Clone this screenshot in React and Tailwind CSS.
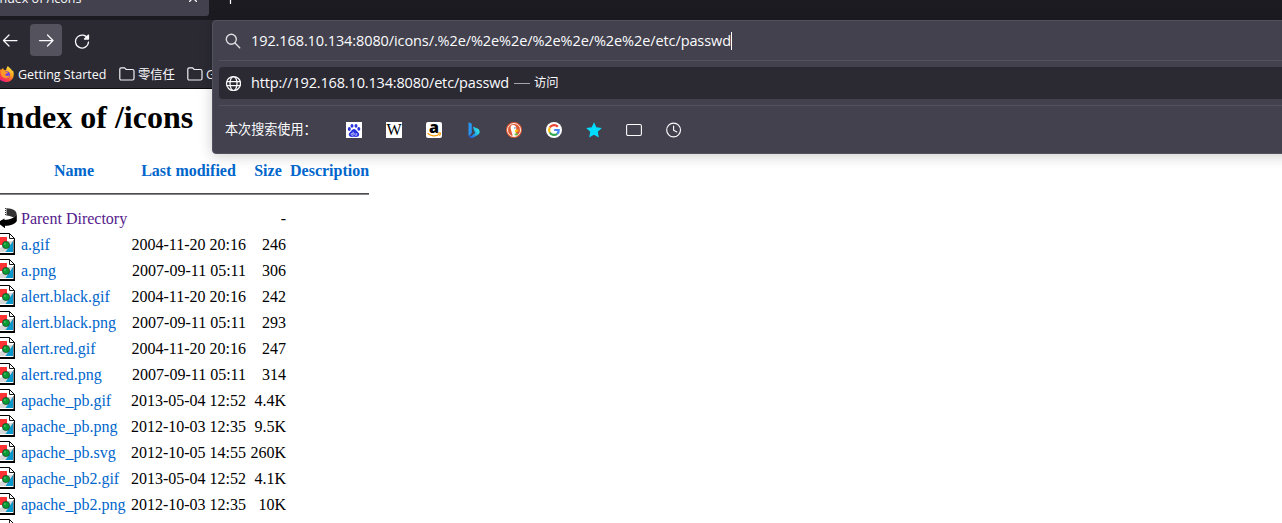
import React from "react";

const files = [
  ["a.gif", "2004-11-20 20:16", "246"],
  ["a.png", "2007-09-11 05:11", "306"],
  ["alert.black.gif", "2004-11-20 20:16", "242"],
  ["alert.black.png", "2007-09-11 05:11", "293"],
  ["alert.red.gif", "2004-11-20 20:16", "247"],
  ["alert.red.png", "2007-09-11 05:11", "314"],
  ["apache_pb.gif", "2013-05-04 12:52", "4.4K"],
  ["apache_pb.png", "2012-10-03 12:35", "9.5K"],
  ["apache_pb.svg", "2012-10-05 14:55", "260K"],
  ["apache_pb2.gif", "2013-05-04 12:52", "4.1K"],
  ["apache_pb2.png", "2012-10-03 12:35", "10K"],
];

function ImageFileIcon() {
  return (
    <svg className="mb-[2px] block h-[22px] w-4" viewBox="0 0 16 22">
      <path d="M0 1h9.500l4.500 4.500V20H0z" fill="#fff" />
      <path d="M7 8h6v11H0v-4l6-3z" fill="#d8d8d8" />
      <path d="M0 .5h9.500L14.500 5.500V21.300" fill="none" stroke="#000" />
      <path d="M9.500 .5v5h5" fill="none" stroke="#000" strokeWidth=".9" />
      <path d="M13.500 7H15v15H0v-2h13.500z" fill="#000" />
      <path d="M0 4h7v6.500H4L2 12H0z" fill="#ff3333" />
      <path d="M13 8v11H5.500z" fill="#0898cc" />
      <circle cx="6" cy="12" r="3.600" fill="#079b34" stroke="#173d23" strokeWidth=".7" />
      <path d="M4.200 10.500h1.500v1H4.200z" fill="#84d69b" />
    </svg>
  );
}

function BackIcon() {
  return (
    <svg className="mb-[2px] block h-[22px] w-[18px]" viewBox="0 0 18 22">
      <path d="M7 1.200l4 .5c4 1 5.700 3 5.700 6L14 10.500 9.500 9 7 8.500z" fill="#333" />
      <path d="M5.500 1v8" stroke="#333" strokeDasharray="1 1" />
      <path d="M6.500 1.500v7" stroke="#333" strokeDasharray="1 1" />
      <path d="M16.800 7.500v6.500c-1.500 3-6 4.800-11.800 4.800v2.500L0 17.500V14l4.500-2.500V13c5.500-.5 9.500-1.500 12.300-5.500z" fill="#000" />
    </svg>
  );
}

function Folder() {
  return (
    <svg className="h-[14px] w-4 shrink-0" viewBox="0 0 16 14" fill="none" stroke="#f0f0f4" strokeWidth="1.200">
      <path d="M.8 11.500V2.200C.8 1.300 1.400.8 2.200.8h3.300l1.700 1.700h6.200c1 0 1.600.6 1.600 1.500v7.500c0 .9-.6 1.500-1.500 1.500H2.200c-.8 0-1.400-.6-1.400-1.500z" />
    </svg>
  );
}

function FirefoxIcon() {
  return (
    <svg className="h-4 w-[14px] shrink-0" viewBox="2 0 14 16">
      <defs>
        <linearGradient id="fox" x1=".9" y1="0" x2=".25" y2="1">
          <stop offset="0" stopColor="#fff44f" />
          <stop offset=".4" stopColor="#ffab20" />
          <stop offset=".7" stopColor="#ff4b3b" />
          <stop offset="1" stopColor="#e31587" />
        </linearGradient>
      </defs>
      <path d="M10 0c1 2 4 3 4 5l1-.5c1 2 .9 5 .2 7A8 8 0 0 1 0 8c0-2 1-4 2-5l1 1 2-2 1 2 2 .2C8.500 2 9 1 10 0z" fill="url(#fox)" />
      <circle cx="8.500" cy="8.700" r="3.500" fill="#7542e5" />
      <path d="M3 5c2-1 4-.5 5 1l2 .3c-.3 1-1.500 1.400-2.500 1.700-.7 1 .2 2.300 2 2 1-.2 2-.3 2 .2-1 2-4 2.600-6 1.300C3 10 2.500 7 3 5z" fill="#ff9828" />
    </svg>
  );
}

function Baidu() {
  return (
    <svg className="h-4 w-4" viewBox="0 0 16 16">
      <path fill="#fff" d="M0 0h16v16H0z" />
      <g fill="#2932e1">
        <ellipse cx="3.300" cy="7" rx="1.500" ry="1.900" />
        <ellipse cx="6" cy="3.800" rx="1.500" ry="1.900" />
        <ellipse cx="10" cy="3.800" rx="1.500" ry="1.900" />
        <ellipse cx="12.800" cy="6.800" rx="1.500" ry="1.900" />
        <path d="M8 7c1.500 0 2 1.300 3.300 2.500 1.700 1.500 2.300 2.400 1.700 4-.7 1.700-2.600 1.400-5 1.300-2.400.1-4.300.4-5-1.300-.6-1.600 0-2.500 1.700-4C6 8.300 6.500 7 8 7z" />
      </g>
      <path d="M7.200 9.800v3.500H6c-1.300 0-1.300-2 0-2h1.200M8.800 11v1.500c0 .7.400.8.900.8h1v-2.300" stroke="#fff" strokeWidth=".6" fill="none" />
    </svg>
  );
}

function Amazon() {
  return (
    <div className="relative h-4 w-4 overflow-hidden rounded-[2px] bg-white">
      <span className="absolute left-[3px] top-[-4px] font-['Open_Sans',sans-serif] text-[16px] font-extrabold leading-[18px] text-black">a</span>
      <svg className="absolute inset-0" width="16" height="16" viewBox="0 0 16 16" fill="none" stroke="#ff9900" strokeWidth="1.200">
        <path d="M1.500 11.300c3.500 3 8.300 3.300 11.500 1.200M11.500 11.200c2-.6 3.300-.3 2.900.3-.1 1-.5 1.600-1 2" />
      </svg>
    </div>
  );
}

function Bing() {
  return (
    <svg className="h-4 w-4" viewBox="0 0 16 16">
      <defs>
        <linearGradient id="bing" x1="0" y1="1" x2="1" y2=".5">
          <stop stopColor="#1b48ef" />
          <stop offset="1" stopColor="#2ce5e4" />
        </linearGradient>
      </defs>
      <path d="M2.500.2l2.700 1.100c.4.200.6.5.6.900v8.500l-2.500 3.400c-.5-.4-.8-1-.8-1.700z" fill="#2994f2" />
      <path d="M7 5.600c-.2-.6.200-1 .9-.7l3.500 1.700c1.700.8 2.300 2 2.200 3.600-.1 1.100-.8 2-1.500 2.500l-4.600 2.800c-2 1.200-4.200.3-4.800-1.500.8.5 1.700.4 2.500-.1L9.200 11 8.300 9z" fill="url(#bing)" />
    </svg>
  );
}

function DuckDuckGo() {
  return (
    <svg className="h-4 w-4" viewBox="0 0 16 16">
      <circle cx="8" cy="8" r="8" fill="#de5833" />
      <circle cx="8" cy="8" r="6.500" fill="#de5833" stroke="#fff" strokeWidth=".9" />
      <path d="M5 4.100c1-1.600 4.500-1.600 5.200 1.300l.1 2.900-.6 2.200 1.200 3.200c-1.500.7-3 .7-4.100.4L5.200 8.500C4.800 7 4.300 5.600 5 4.100z" fill="#fff" />
      <circle cx="8.900" cy="5.900" r=".7" fill="#2d4f8d" />
      <path d="M9 8c1.500-.5 3.500-.5 4 .1-.6.800-2 .9-3.500.9l2.600.5c-.7 1-2.900 1-3.500-.1z" fill="#fdd20a" />
      <path d="M8.500 11.800l3-.7.2 2.300-3.200-.2z" fill="#65bc46" />
    </svg>
  );
}

function Google() {
  return (
    <svg className="h-4 w-4" viewBox="0 0 16 16">
      <circle cx="8" cy="8" r="8" fill="#fff" />
      <g fill="none" strokeWidth="2.200">
        <path d="M11.800 4.800A4.900 4.900 0 0 0 3.800 5.500" stroke="#ea4335" />
        <path d="M3.800 5.500a4.900 4.900 0 0 0 0 5" stroke="#fbbc05" />
        <path d="M3.800 10.500a4.900 4.900 0 0 0 7.500 1.200" stroke="#34a853" />
        <path d="M11.300 11.700A4.600 4.600 0 0 0 12.700 8H8.200" stroke="#4285f4" />
      </g>
    </svg>
  );
}

const line = { fill: "none", stroke: "#fbfbfe", strokeWidth: 1.25, strokeLinecap: "round", strokeLinejoin: "round" };

function Toolbar() {
  return (
    <div className="h-[89px] w-full bg-[#2b2a33] font-['Open_Sans','Noto_Sans_CJK_SC',sans-serif] text-[#fbfbfe]">
      <div className="flex h-5 items-start bg-[#1c1b22]">
        <div className="flex h-4 w-[209px] items-start justify-between rounded-br-[3px] bg-[#42414d] pr-3">
          <span className="-mt-[9px] -ml-[4px] whitespace-nowrap text-[12.500px] leading-4">Index of /icons</span>
          <svg className="-mt-[6px] h-2 w-2" viewBox="0 0 8 8" {...line}><path d="M0 0l8 8M8 0L0 8" /></svg>
        </div>
        <svg className="ml-[15px] -mt-2 h-3 w-3" viewBox="0 0 12 12" {...line}><path d="M0 6h12M6.500 0v11.500" /></svg>
      </div>
      <div className="flex h-[40px] items-center">
        <svg className="ml-[2px] h-4 w-4" viewBox="0 0 16 16" {...line}><path d="M15 8.500H1.500M7 3L1.500 8.500 7 14" /></svg>
        <div className="ml-3 flex h-8 w-8 items-center justify-center rounded bg-[#53525d]">
          <svg className="h-4 w-4" viewBox="0 0 16 16" {...line}><path d="M1.500 8.500H15M9.500 3L15 8.500 9.500 14" /></svg>
        </div>
        <svg className="ml-3 mt-[2px] h-4 w-4" viewBox="0 0 16 16" {...line}><path d="M14 6A6.500 6.500 0 1 0 14.500 9M10.500 6h4V2z" /><path d="M11 5.500h3.500V2z" fill="#fbfbfe" stroke="none" /></svg>
      </div>
      <div className="flex h-[28px] items-center whitespace-nowrap text-[12.500px]">
        <FirefoxIcon />
        <span className="ml-1 mt-[2px] w-[101px] text-[12.500px]">Getting Started</span>
        <Folder />
        <span className="ml-[3px] mt-[2px] w-[49px] text-[12.300px]">零信任</span>
        <Folder />
        <span className="ml-[3px] mt-[2px]">G</span>
      </div>
      <div className="h-px bg-[#0c0c0d]" />
    </div>
  );
}

function UrlPopup() {
  return (
    <div className="absolute left-[212px] top-5 flex h-[134px] w-[1100px] flex-col rounded border border-[#52515e] bg-[#42414d] px-[6px] font-['Open_Sans','Noto_Sans_CJK_SC',sans-serif] text-[#fbfbfe] shadow-[0_2px_14px_rgba(12,12,13,0.2)]">
      <div className="flex h-[39px] shrink-0 items-center pl-[6px]">
        <svg className="h-4 w-4" viewBox="0 0 16 16" {...line} stroke="#dddde2" strokeWidth="1.400"><circle cx="6.300" cy="6.300" r="5" /><path d="M10 10l4.700 4.700" /></svg>
        <span className="ml-[10px] whitespace-nowrap text-[14.500px] tracking-[-0.095px]">192.168.10.134:8080/icons/.%2e/%2e%2e/%2e%2e/%2e%2e/etc/passwd</span>
        <span className="h-[18px] w-px bg-white" />
      </div>
      <div className="h-px shrink-0 bg-[#52515e]" />
      <div className="mt-[6px] flex h-8 shrink-0 items-center rounded bg-[#2b2a33] pl-[6px]">
        <svg className="h-4 w-4" viewBox="0 0 16 16" {...line}><circle cx="8.500" cy="8.500" r="7" /><ellipse cx="8.500" cy="8.500" rx="3.500" ry="7" /><path d="M2 6.500h13M2 10.500h13" /></svg>
        <span className="ml-[10px] whitespace-nowrap text-[14.500px] tracking-[-0.160px]">http://192.168.10.134:8080/etc/passwd</span>
        <span className="ml-[5px] h-px w-4 bg-[#a5a4ad]" />
        <span className="ml-[4px] text-[12.300px]">访问</span>
      </div>
      <div className="mt-[6px] h-px shrink-0 bg-[#52515e]" />
      <div className="flex h-[48px] shrink-0 items-center pl-[6px]">
        <span className="w-[121px] whitespace-nowrap text-[13.100px]">本次搜索使用：</span>
        <div className="flex items-center gap-6">
          <Baidu />
          <div className="flex h-4 w-4 items-center justify-center overflow-hidden bg-white font-['Liberation_Serif',serif] text-[16px] leading-4 text-black">W</div>
          <Amazon />
          <Bing />
          <DuckDuckGo />
          <Google />
          <svg className="h-4 w-4" viewBox="0 0 16 16"><path d="M8 .3l2.300 5 5.500.6-4 3.800 1 5.700L8 12.700l-4.800 2.700 1-5.700-4-3.800 5.500-.6z" fill="#00ddff" /></svg>
          <svg className="h-4 w-4" viewBox="0 0 16 16" fill="none" stroke="#fbfbfe" strokeWidth="1.100"><rect x=".6" y="2.500" width="14.800" height="11" rx="1.400" /></svg>
          <svg className="h-4 w-4" viewBox="0 0 16 16" {...line} strokeWidth="1.150"><circle cx="7.600" cy="8" r="6.900" /><path d="M7.600 4v4.200l3.200 1.800" /></svg>
        </div>
      </div>
    </div>
  );
}

export default function App() {
  return (
    <div className="relative h-[523px] w-[1282px] overflow-hidden bg-white">
      <Toolbar />
      <main className="font-['Liberation_Serif',serif] text-[16px] text-black">
        <h1 className="-ml-[6px] h-[69px] whitespace-nowrap pt-[10px] text-[32px] font-bold leading-[36px]">Index of /icons</h1>
        <div className="flex h-[35px] items-start font-bold leading-[26px] text-[#0066cc]">
          <span className="w-[106px] ml-[21px] text-center">Name</span>
          <span className="ml-1 w-[115px] text-center">Last modified</span>
          <span className="ml-1 w-9 text-center">Size</span>
          <span className="ml-1">Description</span>
        </div>
        <div className="h-[2px] w-[369px] border-t border-[#4e4c50] bg-[#858386]" />
        <div className="mt-[11px]">
          <div className="flex h-[26px] items-center">
            <div className="w-[21px]"><BackIcon /></div>
            <span className="w-[110px] whitespace-nowrap text-[#551a8b]">Parent Directory</span>
            <span className="w-[155px] text-right">-</span>
          </div>
          {files.map(([name, date, size]) => (
            <div key={name} className="flex h-[26px] items-center whitespace-nowrap">
              <div className="w-[21px]"><ImageFileIcon /></div>
              <span className="w-[105px] text-[#0066cc]">{name}</span>
              <span className="w-[120px] text-right">{date}</span>
              <span className="w-10 text-right">{size}</span>
            </div>
          ))}
          <div className="flex h-[26px] items-center"><ImageFileIcon /></div>
        </div>
      </main>
      <UrlPopup />
    </div>
  );
}
